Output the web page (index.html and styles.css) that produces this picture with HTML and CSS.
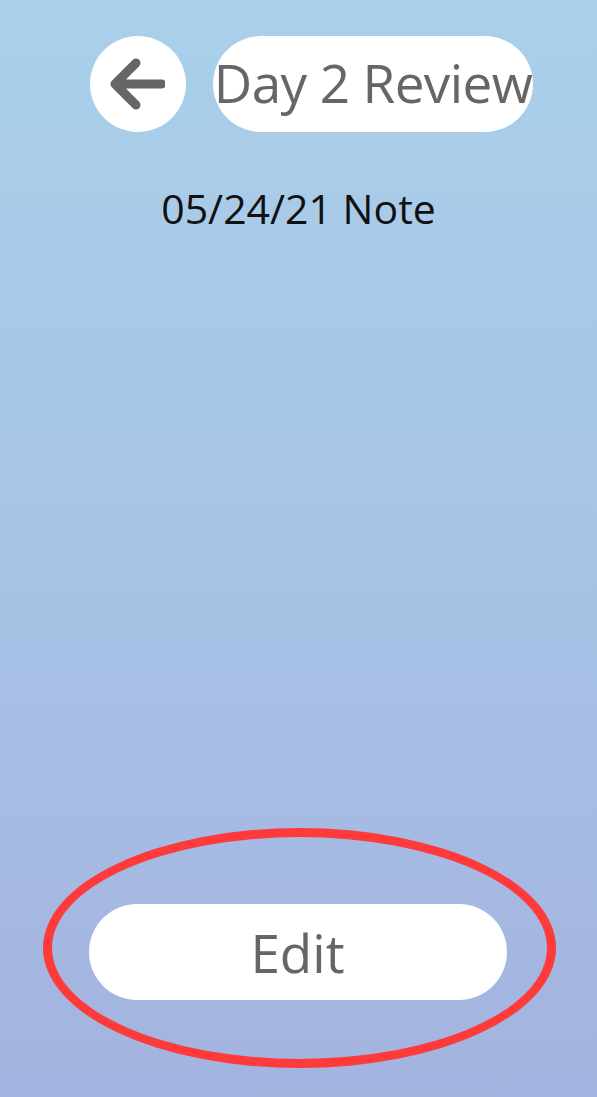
FILE: index.html
```html
<!DOCTYPE html>
<html lang="en">
<head>
<meta charset="utf-8">
<title>Day 2 Review</title>
<link rel="stylesheet" href="styles.css">
</head>
<body>
<div class="screen">
  <header class="top-bar">
    <button class="back-btn" aria-label="Back">
      <svg width="60" height="60" viewBox="0 0 60 60">
        <path d="M10 30 H57 M31 9 L10 30 L31 51" fill="none" stroke="#666" stroke-width="9" stroke-linecap="round" stroke-linejoin="round"/>
      </svg>
    </button>
    <div class="title-pill">Day 2 Review</div>
  </header>
  <p class="note-title">05/24/21 Note</p>
  <div class="footer">
    <div class="edit-wrap">
      <button class="edit-btn">Edit</button>
      <span class="highlight-ring"></span>
    </div>
  </div>
</div>
</body>
</html>
```
FILE: styles.css
```css
* { box-sizing: border-box; }
html, body { margin: 0; padding: 0; }
body {
  width: 597px;
  height: 1097px;
  overflow: hidden;
  background: linear-gradient(to bottom, #a9d0ea 0%, #a8c3e6 50%, #a3b3df 100%);
  font-family: "Open Sans", "Noto Sans", sans-serif;
}
.screen {
  height: 1097px;
  display: flex;
  flex-direction: column;
}
.top-bar {
  display: flex;
  align-items: center;
  padding: 36px 0 0 90px;
  gap: 27px;
}
.back-btn {
  width: 96px;
  height: 96px;
  border-radius: 50%;
  border: none;
  background: #fff;
  padding: 0;
  display: flex;
  align-items: center;
  justify-content: center;
}
.back-btn svg { margin-left: -6px; }
.title-pill {
  width: 320px;
  height: 96px;
  border-radius: 48px;
  background: #fff;
  color: #666;
  font-size: 53px;
  display: flex;
  align-items: center;
  justify-content: center;
  white-space: nowrap;
  letter-spacing: -0.6px;
  padding-bottom: 4px;
}
.note-title {
  margin: 48px 0 0;
  text-align: center;
  font-size: 41px;
  color: #111;
  line-height: 56px;
}
.footer {
  margin-top: auto;
  padding-bottom: 97px;
  display: flex;
  justify-content: center;
}
.edit-wrap {
  position: relative;
  margin-left: -2px;
}
.edit-btn {
  width: 418px;
  height: 96px;
  border-radius: 48px;
  border: none;
  background: #fff;
  color: #666;
  font-family: inherit;
  font-size: 53px;
  padding: 0;
}
.highlight-ring {
  position: absolute;
  left: -46px;
  top: -76px;
  width: 513px;
  height: 240px;
  border: 9px solid #ff3a3a;
  border-radius: 50%;
  pointer-events: none;
}
```
